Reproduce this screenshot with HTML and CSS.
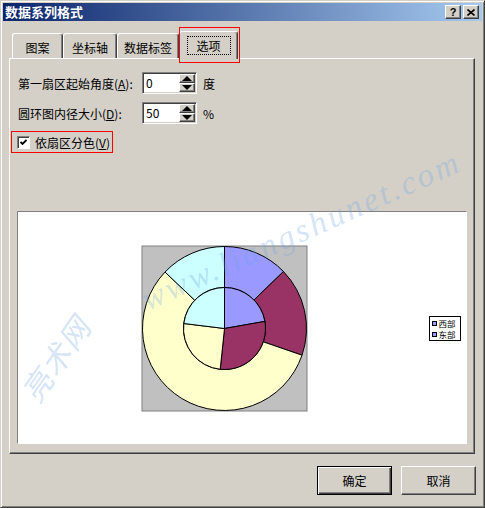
FILE: index.html
```html
<!DOCTYPE html>
<html lang="zh-CN">
<head>
  <meta charset="UTF-8" />
  <title>数据系列格式</title>
  <link rel="stylesheet" href="styles.css">
</head>
<body>
  <div class="window">
    <div class="titlebar">
      <span class="title">数据系列格式</span>
      <div class="title-buttons">
        <span class="tbtn">?</span>
        <span class="tbtn">
          <svg width="8" height="7" viewBox="0 0 8 7">
            <path d="M0.5 0.5 L7.5 6.5 M7.5 0.5 L0.5 6.5" stroke="#000" stroke-width="1.6" />
          </svg>
        </span>
      </div>
    </div>

    <div class="tabs">
      <div class="tab tab-pattern">图案</div>
      <div class="tab tab-axis">坐标轴</div>
      <div class="tab tab-labels">数据标签</div>
      <div class="tab tab-options active"><span class="focus">选项</span></div>
    </div>

    <div class="panel">
      <div class="fields">
        <label class="field-label">第一扇区起始角度(<u>A</u>):</label>
        <div class="spinner">
          <span class="spin-value">0</span>
          <div class="spin-buttons">
            <span class="spin-btn"><span class="arrow-up"></span></span>
            <span class="spin-btn"><span class="arrow-down"></span></span>
          </div>
        </div>
        <span class="unit">度</span>

        <label class="field-label">圆环图内径大小(<u>D</u>):</label>
        <div class="spinner">
          <span class="spin-value">50</span>
          <div class="spin-buttons">
            <span class="spin-btn"><span class="arrow-up"></span></span>
            <span class="spin-btn"><span class="arrow-down"></span></span>
          </div>
        </div>
        <span class="unit">%</span>
      </div>

      <div class="check-row">
        <span class="checkbox">
          <svg width="7" height="7" viewBox="0 0 7 7">
            <path d="M0.5 3 L2.5 5 L6.5 1" fill="none" stroke="#000" stroke-width="1.8" />
          </svg>
        </span>
        <span class="check-label">依扇区分色(<u>V</u>)</span>
      </div>

      <div class="chart">
        <svg width="448" height="231" viewBox="0 0 448 231">
          <rect x="124" y="34" width="165" height="165" fill="#c0c0c0" stroke="#808080" />
          <g stroke="#000" stroke-width="1">
            <!-- outer ring -->
            <path fill="#9999ff" d="M206.5,34.5 A82,82 0 0 1 265.48,59.53 L235.99,88.02 A41,41 0 0 0 206.5,75.5 Z" />
            <path fill="#993366" d="M265.48,59.53 A82,82 0 0 1 284.03,143.2 L245.27,129.85 A41,41 0 0 0 235.99,88.02 Z" />
            <path fill="#ffffcc" d="M284.03,143.2 A82,82 0 1 1 147.02,60.05 L176.76,88.28 A41,41 0 1 0 245.27,129.85 Z" />
            <path fill="#ccffff" d="M147.02,60.05 A82,82 0 0 1 206.5,34.5 L206.5,75.5 A41,41 0 0 0 176.76,88.28 Z" />
            <!-- inner ring -->
            <path fill="#9999ff" d="M206.5,116.5 L206.5,75.5 A41,41 0 0 1 246.88,109.38 Z" />
            <path fill="#993366" d="M206.5,116.5 L246.88,109.38 A41,41 0 0 1 202.21,157.27 Z" />
            <path fill="#ffffcc" d="M206.5,116.5 L202.21,157.27 A41,41 0 0 1 165.81,111.5 Z" />
            <path fill="#ccffff" d="M206.5,116.5 L165.81,111.5 A41,41 0 0 1 206.5,75.5 Z" />
          </g>
          <!-- legend -->
          <rect x="411.5" y="104.5" width="31" height="24" fill="#fff" stroke="#000" />
          <rect x="414.5" y="109.5" width="4" height="4" fill="#9999ff" stroke="#000" />
          <rect x="414.5" y="120.5" width="4" height="4" fill="#9999ff" stroke="#000" />
          <text x="420.5" y="115" class="legend-text">西部</text>
          <text x="420.5" y="126" class="legend-text">东部</text>
        </svg>
      </div>
    </div>

    <div class="buttons">
      <button class="btn default">确定</button>
      <button class="btn">取消</button>
    </div>

    <div class="watermark watermark-cn">亮术网</div>
    <div class="watermark watermark-url">www.liangshunet.com</div>
  </div>
</body>
</html>
```

FILE: styles.css
```css
body {
  margin: 0;
  font-family: "Noto Sans CJK SC", "Liberation Sans", sans-serif;
  font-size: 12px;
  color: #000;
}

.window {
  position: relative;
  width: 485px;
  height: 508px;
  box-sizing: border-box;
  padding: 2px;
  overflow: hidden;
  background: #d4d0c8;
  border: 1px solid;
  border-color: #d4d0c8 #404040 #404040 #d4d0c8;
  box-shadow: inset 1px 1px #fff, inset -1px -1px #808080;
}

/* title bar */
.titlebar {
  height: 18px;
  display: flex;
  align-items: center;
  justify-content: space-between;
  padding: 0 3px 0 2px;
  background: linear-gradient(to right, #0a246a, #a6caf0);
}

.title {
  color: #fff;
  font-weight: bold;
  font-size: 13px;
  line-height: 18px;
}

.title-buttons {
  display: flex;
  gap: 2px;
}

.tbtn {
  width: 16px;
  height: 14px;
  box-sizing: border-box;
  display: flex;
  align-items: center;
  justify-content: center;
  background: #d4d0c8;
  border: 1px solid;
  border-color: #fff #404040 #404040 #fff;
  box-shadow: inset -1px -1px #808080;
  font: bold 11px "Liberation Sans", sans-serif;
}

/* tabs */
.tabs {
  position: relative;
  z-index: 1;
  display: flex;
  align-items: flex-end;
  height: 27px;
  margin-top: 10px;
  padding-left: 9px;
}

.tab {
  height: 25px;
  box-sizing: border-box;
  display: flex;
  align-items: center;
  justify-content: center;
  background: #d4d0c8;
  border: 1px solid;
  border-color: #fff #404040 transparent #fff;
  border-bottom: none;
  border-radius: 3px 3px 0 0;
  box-shadow: inset -1px 0 #808080;
  padding-top: 2px;
}

.tab-pattern { width: 51px; }
.tab-axis { width: 54px; }
.tab-labels { width: 62px; }

.tab-options {
  position: relative;
  width: 59px;
  height: 28px;
  margin-bottom: -1px;
  padding-top: 0;
}

.tab-options::after {
  content: "";
  position: absolute;
  left: -1px;
  top: -5px;
  width: 59px;
  height: 34px;
  border: 1px solid #ff0000;
}

.focus {
  display: flex;
  align-items: center;
  justify-content: center;
  width: 44px;
  height: 19px;
  box-sizing: border-box;
  border: 1px dotted #000;
}

/* panel */
.panel {
  margin-left: 6px;
  width: 466px;
  height: 396px;
  box-sizing: border-box;
  padding: 13px 7px 0 7px;
  border: 1px solid;
  border-color: #fff #404040 #404040 #fff;
  box-shadow: inset -1px -1px #808080;
}

.fields {
  display: grid;
  grid-template-columns: 125px 55px auto;
  row-gap: 8px;
  align-items: center;
}

.field-label {
  padding-left: 1px;
}

.spinner {
  height: 22px;
  box-sizing: border-box;
  display: flex;
  padding: 1px;
  background: #fff;
  border: 1px solid;
  border-color: #808080 #fff #fff #808080;
  box-shadow: inset 1px 1px #404040, inset -1px -1px #d4d0c8;
}

.spin-value {
  flex: 1;
  padding-left: 2px;
  line-height: 18px;
}

.spin-buttons {
  width: 16px;
  display: flex;
  flex-direction: column;
}

.spin-btn {
  flex: 1;
  display: flex;
  align-items: center;
  justify-content: center;
  box-sizing: border-box;
  background: #d4d0c8;
  border: 1px solid;
  border-color: #fff #404040 #404040 #fff;
  box-shadow: inset -1px -1px #808080;
}

.arrow-up {
  border-left: 5px solid transparent;
  border-right: 5px solid transparent;
  border-bottom: 5px solid #000;
}

.arrow-down {
  border-left: 5px solid transparent;
  border-right: 5px solid transparent;
  border-top: 5px solid #000;
}

.unit {
  padding-left: 6px;
}

.check-row {
  display: flex;
  align-items: center;
  gap: 5px;
  width: 102px;
  height: 22px;
  box-sizing: border-box;
  margin: 7px 0 0 -6px;
  padding-left: 5px;
  border: 1px solid #ff0000;
}

.checkbox {
  width: 13px;
  height: 13px;
  box-sizing: border-box;
  display: flex;
  align-items: center;
  justify-content: center;
  background: #fff;
  border: 1px solid;
  border-color: #808080 #fff #fff #808080;
  box-shadow: inset 1px 1px #404040;
}

.chart {
  width: 450px;
  height: 233px;
  box-sizing: border-box;
  margin-top: 58px;
  background: #fff;
  border: 1px solid;
  border-color: #808080 #fff #fff #808080;
}

.chart svg {
  display: block;
}

.legend-text {
  font-family: "Noto Sans CJK SC", sans-serif;
  font-size: 8.5px;
}

/* dialog buttons */
.buttons {
  display: flex;
  justify-content: flex-end;
  gap: 9px;
  margin-top: 12px;
  padding-right: 6px;
}

.btn {
  width: 75px;
  height: 29px;
  box-sizing: border-box;
  padding: 0;
  background: #d4d0c8;
  font: 12px "Noto Sans CJK SC", sans-serif;
  color: #000;
  border: 1px solid;
  border-color: #fff #404040 #404040 #fff;
  box-shadow: inset -1px -1px #808080;
}

.btn.default {
  border-color: #000;
  box-shadow: inset 1px 1px #fff, inset -1px -1px #404040, inset -2px -2px #808080;
}

/* site watermark over the screenshot */
.watermark {
  position: absolute;
  white-space: nowrap;
  color: rgba(110, 165, 225, 0.3);
  pointer-events: none;
}

.watermark-cn {
  left: 6px;
  top: 335px;
  transform: rotate(-55deg);
  font: italic 30px "Noto Sans CJK SC", sans-serif;
  letter-spacing: 2px;
}

.watermark-url {
  left: 150px;
  top: 280px;
  transform: rotate(-24deg);
  transform-origin: left bottom;
  font: italic 33px "Liberation Serif", serif;
  letter-spacing: 3px;
}
```
